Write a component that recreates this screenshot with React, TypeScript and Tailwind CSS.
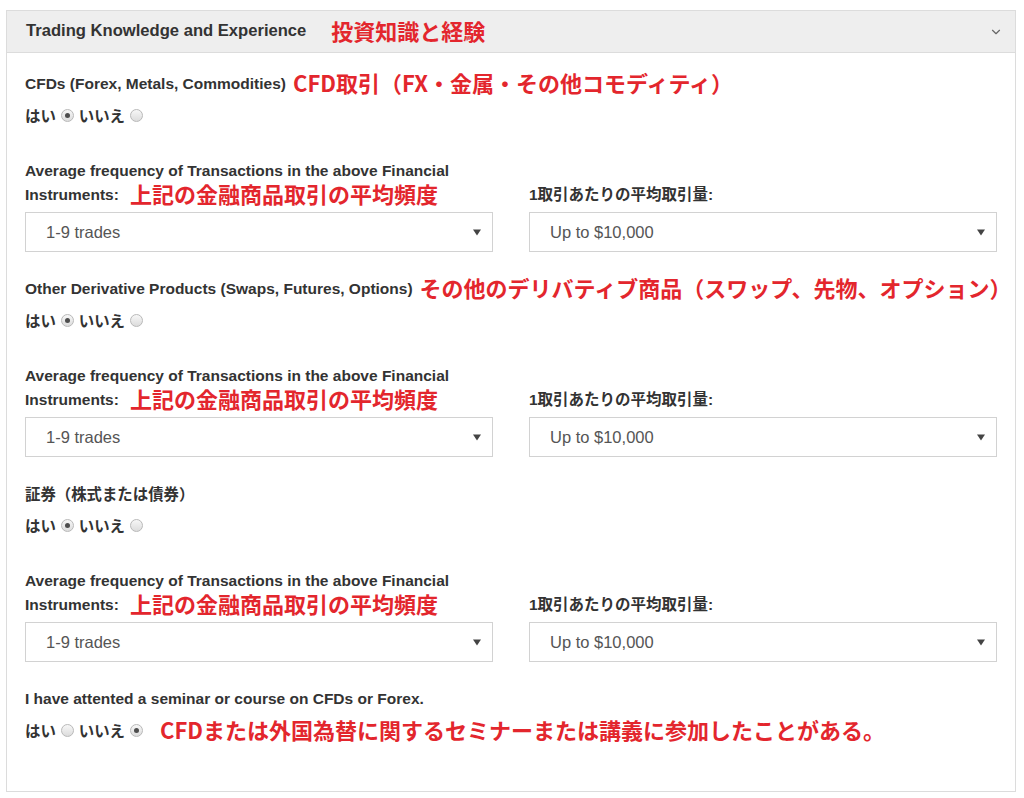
import { ChevronDown } from 'lucide-react';

const EN = "font-['Liberation_Sans','Noto_Sans_CJK_JP',sans-serif]";
const JP = "font-['Noto_Sans_CJK_JP',sans-serif]";
const RED = `${JP} font-bold text-[22px] leading-none text-[#e3262d] whitespace-nowrap shrink-0 -translate-y-[2px]`;

function Radio({ checked }: { checked: boolean }) {
  return (
    <span className="inline-flex w-[13px] h-[13px] rounded-full border border-[#b9b9b9] bg-gradient-to-b from-[#f7f7f7] to-[#dcdcdc] items-center justify-center mx-[5px] -translate-y-[1px]">
      {checked && <span className="w-[5px] h-[5px] rounded-full bg-[#4d4d4d]" />}
    </span>
  );
}

function YesNo({ yes, note }: { yes: boolean; note?: string }) {
  return (
    <div className={`h-8 flex items-center whitespace-nowrap text-[15.4px] font-bold text-[#333] ${JP}`}>
      <span>はい</span>
      <Radio checked={yes} />
      <span>いいえ</span>
      <Radio checked={!yes} />
      {note && <span className={`${RED} ml-[12px]`}>{note}</span>}
    </div>
  );
}

function FakeSelect({ value }: { value: string }) {
  return (
    <div className="h-10 border border-[#d2d2d2] bg-white flex items-center justify-between pl-[20px] pr-[11px]">
      <span className={`${EN} text-[16.5px] text-[#555]`}>{value}</span>
      <svg width="8" height="7" viewBox="0 0 8 7">
        <path d="M0 0.5 L8 0.5 L4 6.5 Z" fill="#444" />
      </svg>
    </div>
  );
}

function Frequency() {
  return (
    <div className="grid grid-cols-2 gap-x-[36px] mt-[27px]">
      <div>
        <div className={`${EN} text-[15.5px] font-bold text-[#333] leading-[24px] whitespace-nowrap`}>
          Average frequency of Transactions in the above Financial
        </div>
        <div className="h-[24px] flex items-center whitespace-nowrap">
          <span className={`${EN} text-[15.5px] font-bold text-[#333]`}>Instruments:</span>
          <span className={`${RED} ml-[11px]`}>上記の金融商品取引の平均頻度</span>
        </div>
        <div className="mt-[5px]">
          <FakeSelect value="1-9 trades" />
        </div>
      </div>
      <div>
        <div className="h-[24px]" />
        <div className={`h-[24px] flex items-center ${EN} text-[15.5px] font-bold text-[#333]`}>
          1取引あたりの平均取引量:
        </div>
        <div className="mt-[5px]">
          <FakeSelect value="Up to $10,000" />
        </div>
      </div>
    </div>
  );
}

function Section({ label, note }: { label: string; note?: string }) {
  return (
    <div className="pb-[21px]">
      <div className="h-8 flex items-center whitespace-nowrap">
        <span className={`${EN} text-[15.5px] font-bold text-[#333] shrink-0`}>{label}</span>
        {note && <span className={`${RED} ml-[7px]`}>{note}</span>}
      </div>
      <YesNo yes={true} />
      <Frequency />
    </div>
  );
}

export default function App() {
  return (
    <div className="w-[1024px] h-[798px] bg-white pt-[10px] px-[6px]">
      <div className="border border-[#dcdcdc] w-[1010px]">
        <div className="h-[42px] bg-[#eeeeee] border-b border-[#dcdcdc] flex items-center pl-[19px] pr-[12px] whitespace-nowrap">
          <span className={`${EN} text-[16.6px] font-bold text-[#333]`}>Trading Knowledge and Experience</span>
          <span className={`${RED} ml-[25px]`}>投資知識と経験</span>
          <ChevronDown className="ml-auto w-[14px] h-[14px] text-[#666]" strokeWidth={2} />
        </div>
        <div className="pt-[15px] px-[18px] pb-[44px]">
          <Section label="CFDs (Forex, Metals, Commodities)" note="CFD取引（FX・金属・その他コモディティ）" />
          <Section
            label="Other Derivative Products (Swaps, Futures, Options)"
            note="その他のデリバティブ商品（スワップ、先物、オプション）"
          />
          <div className="pb-[21px]">
            <div className={`h-8 flex items-center ${JP} text-[15.4px] font-bold text-[#333]`}>証券（株式または債券）</div>
            <YesNo yes={true} />
            <Frequency />
          </div>
          <div className="h-8 flex items-center whitespace-nowrap">
            <span className={`${EN} text-[15.5px] font-bold text-[#333]`}>
              I have attented a seminar or course on CFDs or Forex.
            </span>
          </div>
          <YesNo yes={false} note="CFDまたは外国為替に関するセミナーまたは講義に参加したことがある。" />
        </div>
      </div>
    </div>
  );
}
